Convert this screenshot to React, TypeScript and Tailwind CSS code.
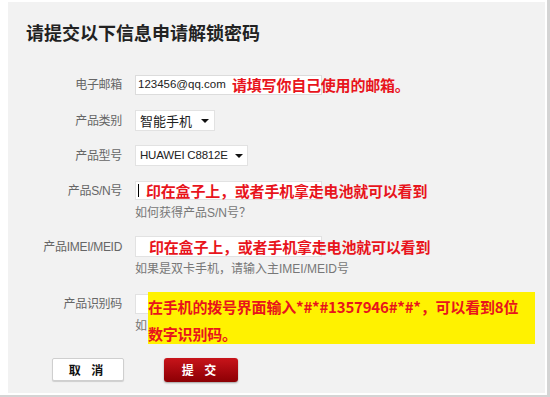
const cjk = '"Noto Sans CJK SC", "Liberation Sans", sans-serif';
const latin = '"Liberation Sans", "Noto Sans CJK SC", sans-serif';

function Caret() {
  return (
    <svg viewBox="0 0 8 4" className="h-[4px] w-[8px] shrink-0" aria-hidden="true">
      <path d="M0 0h8L4 4z" fill="#111" />
    </svg>
  );
}

function Label({ children }: { children: React.ReactNode }) {
  return (
    <div className="w-[114px] shrink-0 text-right text-[12px] leading-4 tracking-[-0.3px] text-[#666]" style={{ fontFamily: latin }}>
      {children}
    </div>
  );
}

function Note({ children, className = '' }: { children: React.ReactNode; className?: string }) {
  return (
    <span
      className={`pointer-events-none absolute top-1/2 -translate-y-1/2 whitespace-nowrap text-[15px] font-bold leading-5 tracking-[-0.2px] text-[#e8141c] ${className}`}
      style={{ fontFamily: cjk }}
    >
      {children}
    </span>
  );
}

export default function App() {
  return (
    <div className="h-[397px] w-[550px] overflow-hidden bg-[#d4d4d4]">
      <div className="h-[395px] w-[547px] bg-white pl-[8px] pt-[2px]">
        <div className="h-[391px] w-[537px] bg-[#f2f2f2]" style={{ fontFamily: cjk }}>
          {/* 标题 */}
          <h1 className="pl-[18px] pt-[18px] text-[18px] font-bold leading-6 text-[#222]">
            请提交以下信息申请解锁密码
          </h1>

          <div className="mt-[31px] flex flex-col">
            {/* 电子邮箱 */}
            <div className="flex items-center">
              <Label>电子邮箱</Label>
              <div className="relative ml-[13px] flex h-[20px] w-[187px] items-center border border-[#dcdcdc] bg-white pl-[2px]">
                <span className="whitespace-nowrap text-[11.5px] text-[#222]" style={{ fontFamily: latin }}>123456@qq.com</span>
                <Note className="left-[96px]">请填写你自己使用的邮箱。</Note>
              </div>
            </div>

            {/* 产品类别 */}
            <div className="mt-[15px] flex items-center">
              <Label>产品类别</Label>
              <div className="ml-[13px] flex h-[21px] w-[80px] items-center justify-between border border-[#e2e2e2] bg-white pl-[4px] pr-[5px]">
                <span className="whitespace-nowrap text-[13px] text-[#222]">智能手机</span>
                <Caret />
              </div>
            </div>

            {/* 产品型号 */}
            <div className="mt-[14px] flex items-center">
              <Label>产品型号</Label>
              <div className="ml-[13px] flex h-[21px] w-[113px] items-center justify-between border border-[#e2e2e2] bg-white pl-[4px] pr-[4px]">
                <span className="whitespace-nowrap text-[11.5px] tracking-[-0.2px] text-[#222]" style={{ fontFamily: latin }}>HUAWEI C8812E</span>
                <Caret />
              </div>
            </div>

            {/* 产品S/N号 */}
            <div className="mt-[15px] flex items-center">
              <Label>产品S/N号</Label>
              <div className="relative ml-[13px] h-[19px] w-[187px] border border-[#e2e2e2] bg-white">
                <span className="absolute left-[2px] top-[2px] h-[13px] w-px bg-black" />
                <Note className="left-[10px]">印在盒子上，或者手机拿走电池就可以看到</Note>
              </div>
            </div>
            <div className="ml-[127px] mt-[5px] text-[12px] leading-4 text-[#777]" style={{ fontFamily: latin }}>如何获得产品S/N号？</div>

            {/* 产品IMEI/MEID */}
            <div className="mt-[15px] flex items-center">
              <Label>产品IMEI/MEID</Label>
              <div className="relative ml-[13px] h-[21px] w-[187px] border border-[#e2e2e2] bg-white">
                <Note className="left-[13px]">印在盒子上，或者手机拿走电池就可以看到</Note>
              </div>
            </div>
            <div className="ml-[127px] mt-[4px] text-[12px] leading-4 text-[#777]" style={{ fontFamily: latin }}>如果是双卡手机，请输入主IMEI/MEID号</div>

            {/* 产品识别码 */}
            <div className="mt-[17px] flex items-center">
              <Label>产品识别码</Label>
              <div className="relative ml-[13px] h-[20px] w-[187px] border border-[#e2e2e2] bg-white">
                <div className="absolute left-[12px] top-[-3px] z-10 h-[52px] w-[387px] bg-[#fff200] pt-[1px] text-[15px] font-bold leading-[27px] tracking-[-0.2px] text-[#e8141c]">
                  在手机的拨号界面输入*#*#1357946#*#*，可以看到8位
                  <br />
                  数字识别码。
                </div>
              </div>
            </div>
            {/* 提示文字被黄色注释遮住，只露出第一个字 */}
            <div className="ml-[127px] mt-[3px] text-[12px] leading-4 text-[#777]">如</div>

            {/* 按钮 */}
            <div className="mt-[25px] flex items-start">
              <button
                type="button"
                className="ml-[44px] h-[23px] w-[72px] rounded-[2px] border border-[#cfcfcf] bg-white text-[12px] font-bold tracking-[4px] text-[#111] shadow-[0_1px_1px_rgba(0,0,0,0.15)]"
              >
                取 消
              </button>
              <button
                type="button"
                className="ml-[40px] h-[24px] w-[74px] rounded-[3px] bg-gradient-to-b from-[#c8141a] to-[#8c0004] text-[12px] font-bold tracking-[4px] text-white shadow-[0_1px_2px_rgba(0,0,0,0.35)]"
              >
                提 交
              </button>
            </div>
          </div>
        </div>
      </div>
    </div>
  );
}
